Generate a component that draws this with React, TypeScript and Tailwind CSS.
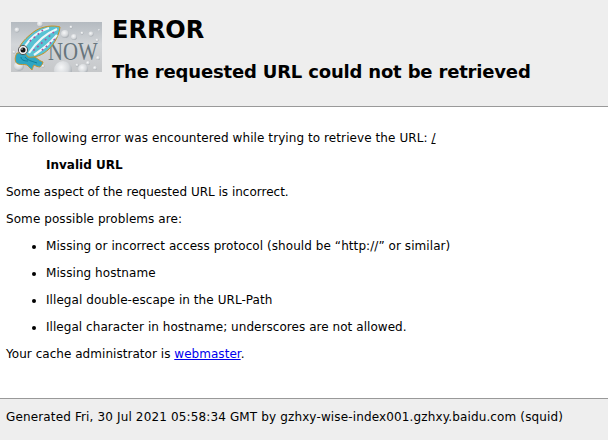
const problems = [
  { text: 'Missing or incorrect access protocol (should be “http://” or similar)', cls: 'tracking-[0.07px]' },
  { text: 'Missing hostname', cls: 'tracking-[0.07px]' },
  { text: 'Illegal double-escape in the URL-Path', cls: 'tracking-[0.07px]' },
  { text: 'Illegal character in hostname; underscores are not allowed.', cls: 'tracking-[0.05px]' },
];

const bubbles = [
  [6, 8, 2.5], [29, 2, 3], [60, 5, 1.5], [63, 15, 3], [71, 11, 1.5], [80, 12, 2.5], [54, 12, 4], [86, 18, 1.5],
  [3, 30, 1.5], [87, 36, 2], [77, 41, 2], [66, 43, 1.5], [52, 48, 9], [72, 47, 5], [32, 44, 1.5], [40, 18, 1.5], [84, 46, 2],
  [8, 44, 5], [88, 8, 1],
];

const Logo = () => (
  <svg width="91" height="50" viewBox="0 0 91 50" className="shrink-0">
    <defs>
      <linearGradient id="bg" x1="0" y1="0" x2="0" y2="1">
        <stop offset="0" stopColor="#b4bac0" />
        <stop offset="0.45" stopColor="#d3d6d9" />
        <stop offset="1" stopColor="#c6c8ca" />
      </linearGradient>
      <radialGradient id="bubble" cx="0.4" cy="0.35" r="0.7">
        <stop offset="0" stopColor="#f6f7f8" />
        <stop offset="0.6" stopColor="#d6d9dc" />
        <stop offset="1" stopColor="#a0a6ac" />
      </radialGradient>
    </defs>
    <rect width="91" height="50" fill="url(#bg)" />
    {bubbles.map(([x, y, r], i) => (
      <circle key={i} cx={x} cy={y} r={r} fill="url(#bubble)" />
    ))}
    <g transform="translate(37 38) scale(0.8 1)">
      <text fontFamily="'Liberation Serif', serif" fontSize="26" fill="#67757d">NOW</text>
    </g>
    {/* tentacles */}
    <path d="M6 31 C3 36 4 41 7 42 C10 43 13 42 16 43 C18 45 20 47 21 48 C22 46 22 44 23 43 C25 44 27 45 29 45 C31 43 32 41 32 40 C29 39 27 37 24 35 L14 31 Z" fill="#2ea6c2" stroke="#c9911f" strokeWidth="0.9" strokeLinejoin="round" />
    <path d="M10 35 C10 38 13 39 17 39 M14 35 C16 38 20 39 26 41" stroke="#0f7f9c" strokeWidth="1" fill="none" />
    {/* mantle */}
    <path d="M49 5 C42 3 32 4 24 9 C17 14 12 19 9 24 L17 35 C24 36 32 33 38 27 C44 21 48 13 49 5 Z" fill="#58c2d4" stroke="#c9911f" strokeWidth="1" strokeLinejoin="round" />
    <path d="M46 7 C36 11 26 19 18 31 M38 6 C28 9 20 15 14 24 M46 13 C40 20 32 27 23 33" stroke="#eef6f8" strokeWidth="2.2" fill="none" />
    <path d="M43 10 L22 29 M32 8 L18 20 M44 17 L29 30" stroke="#a8509e" strokeWidth="1.6" strokeDasharray="1.8 3.4" fill="none" />
    {/* eye */}
    <circle cx="12" cy="28" r="4.6" fill="#ededed" stroke="#3a3a3a" strokeWidth="0.8" />
    <circle cx="12" cy="28" r="2.5" fill="#111111" />
    <circle cx="11" cy="27" r="0.7" fill="#ffffff" />
  </svg>
);

export default function App() {
  return (
    <div className="min-h-[440px] flex flex-col bg-white text-black text-[12px] font-['DejaVu_Sans',Verdana,sans-serif]">
      <header className="h-[107px] bg-[#eeeeee] border-b border-[#999999] flex pt-[22px] pl-[11px]">
        <Logo />
        <div className="ml-[10px] -mt-[8px]">
          <h1 className="text-[24px] font-bold leading-[28px] mt-[2px]">ERROR</h1>
          <h2 className="text-[18px] font-bold leading-[22px] mt-[17px] tracking-[-0.18px]">The requested URL could not be retrieved</h2>
        </div>
      </header>
      <main className="flex-1 px-[6px] pt-[24px] leading-[14px]">
        <p className="tracking-[0.08px]">The following error was encountered while trying to retrieve the URL: <a className="underline" href="#">/</a></p>
        <p className="mt-[13px] ml-[40px] font-bold">Invalid URL</p>
        <p className="mt-[13px]">Some aspect of the requested URL is incorrect.</p>
        <p className="mt-[13px] tracking-[0.08px]">Some possible problems are:</p>
        <ul className="mt-[13px] ml-[40px] list-disc flex flex-col gap-[13px]">
          {problems.map(p => <li key={p.text} className={p.cls}>{p.text}</li>)}
        </ul>
        <p className="mt-[13px] tracking-[0.04px]">Your cache administrator is <a className="underline text-[#0000ee]" href="#">webmaster</a>.</p>
      </main>
      <footer className="h-[42px] bg-[#eeeeee] border-t border-[#999999] px-[6px] pt-[11px] leading-[14px] tracking-[0.14px]">
        Generated Fri, 30 Jul 2021 05:58:34 GMT by gzhxy-wise-index001.gzhxy.baidu.com (squid)
      </footer>
    </div>
  );
}
